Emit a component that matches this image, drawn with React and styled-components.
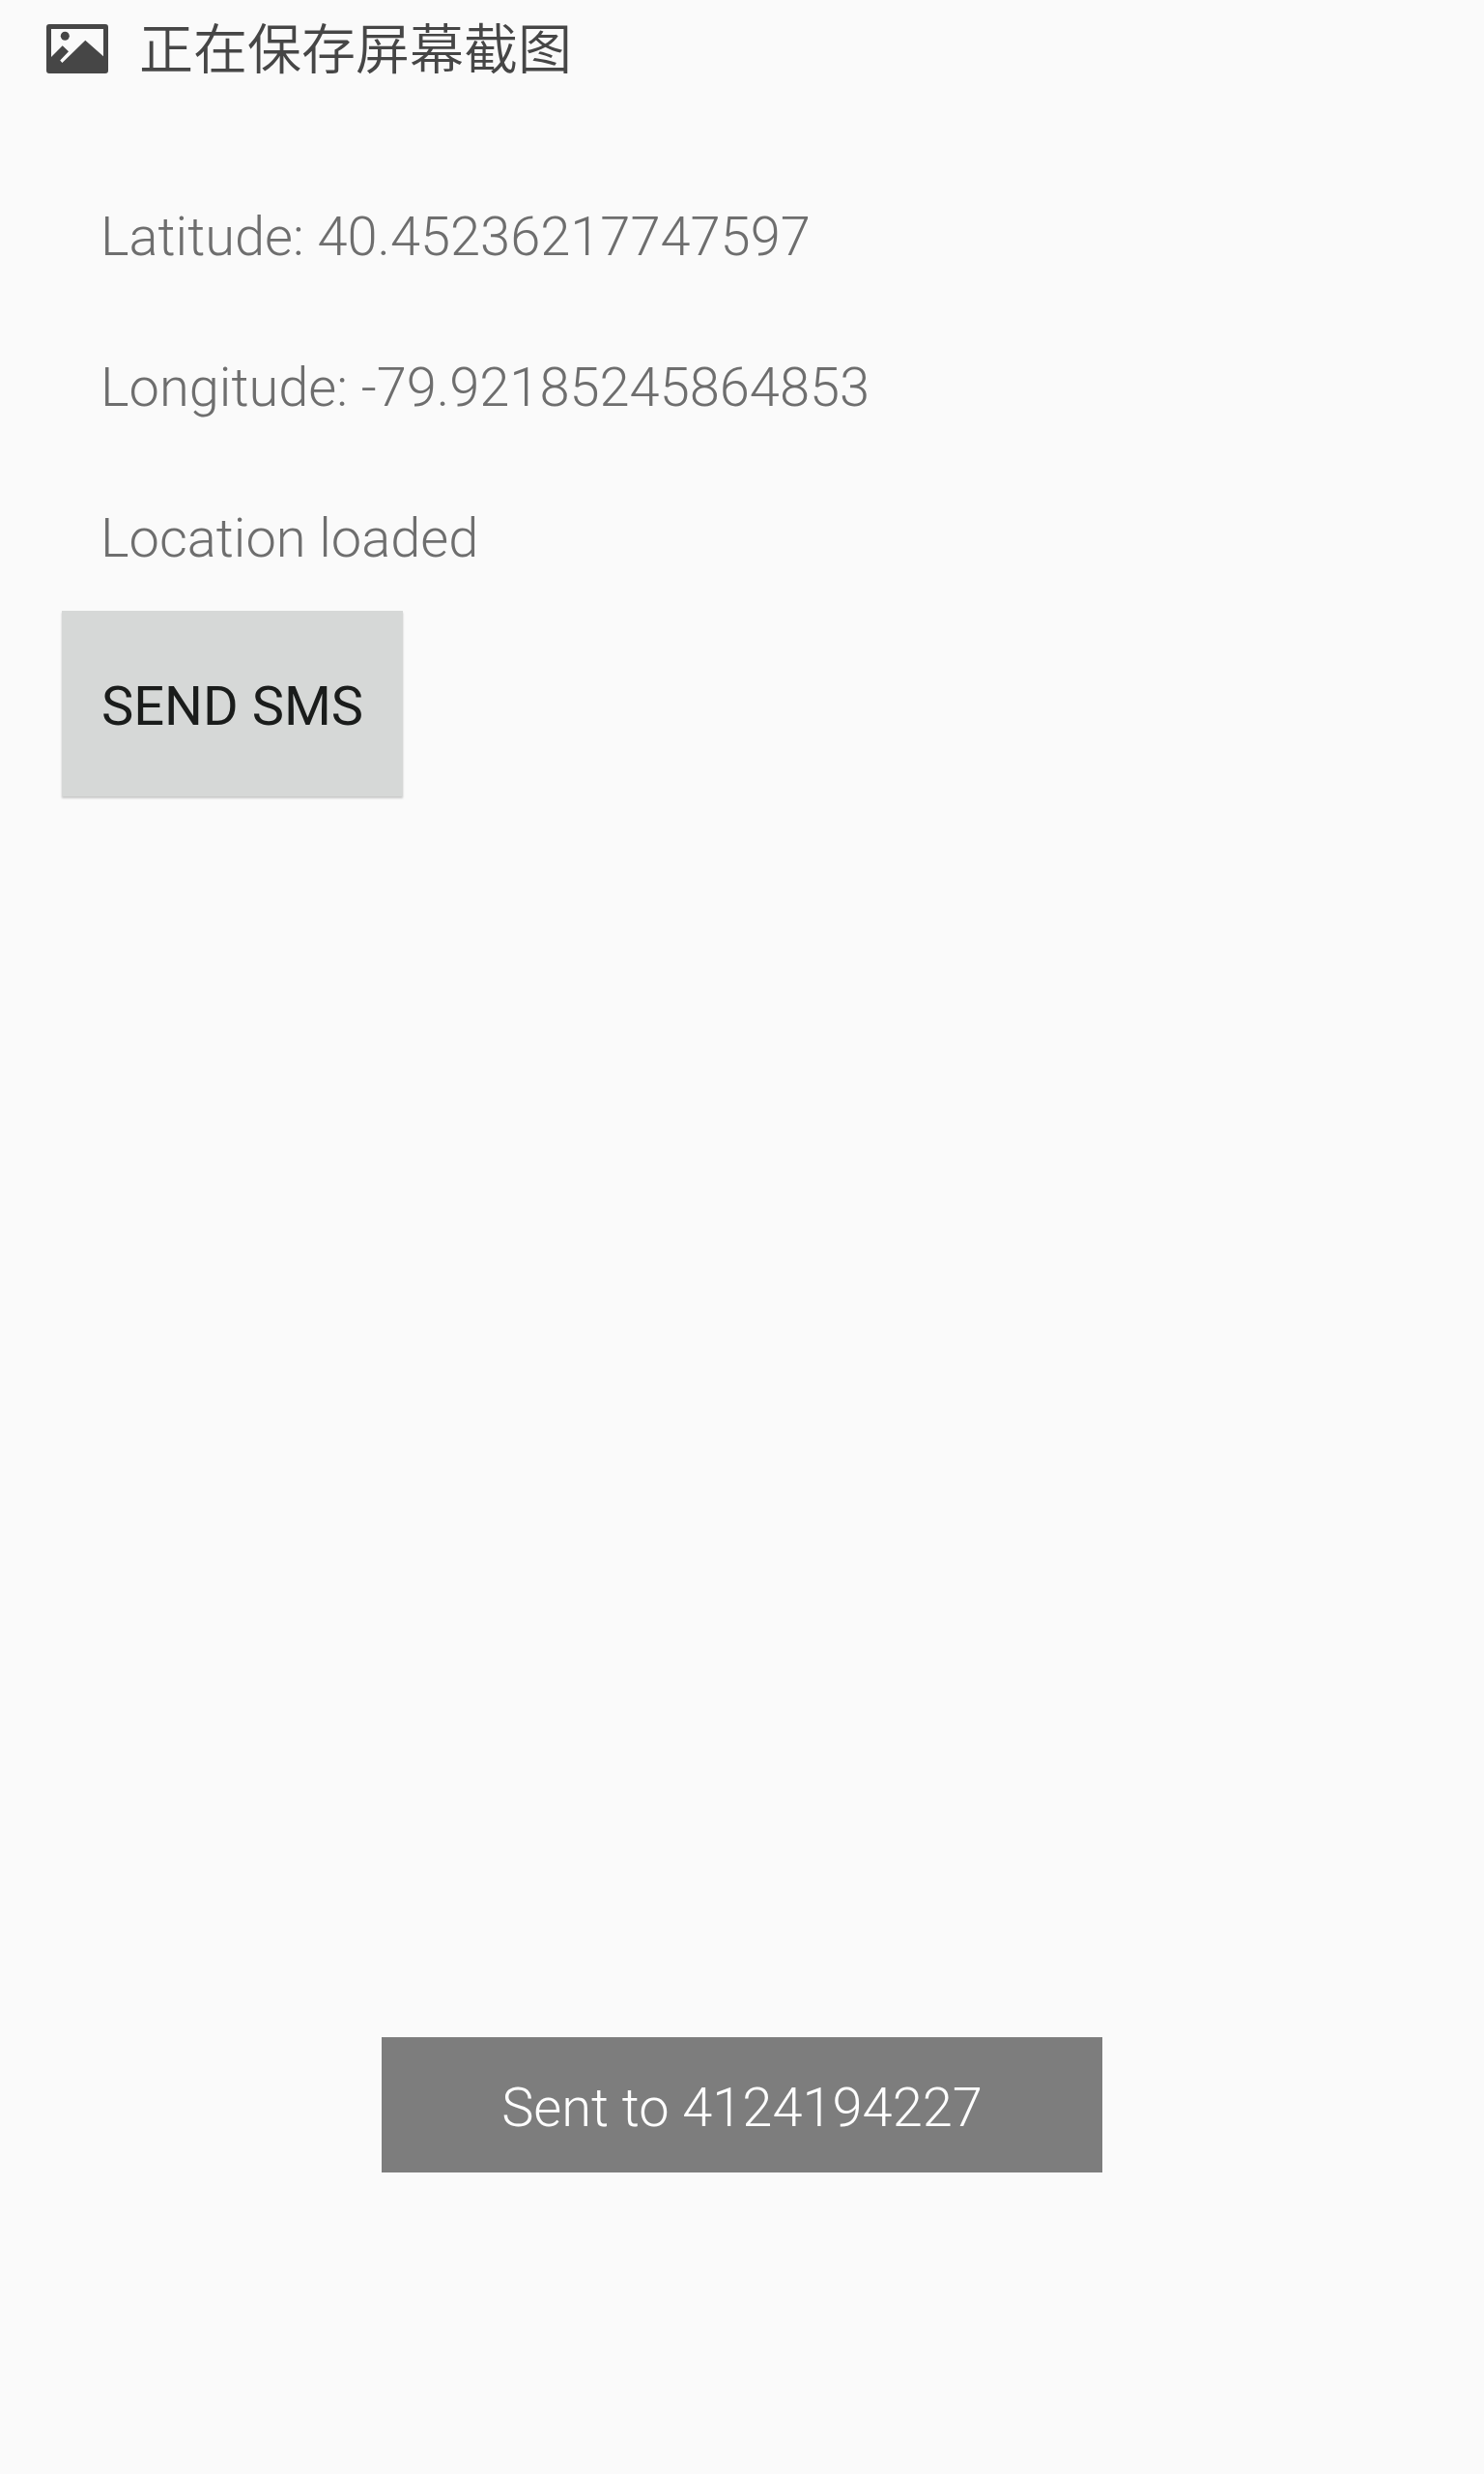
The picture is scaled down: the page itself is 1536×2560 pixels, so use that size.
import React from "react";
import styled, { createGlobalStyle } from "styled-components";

const GlobalStyle = createGlobalStyle`
  * { box-sizing: border-box; }
  body { margin: 0; background: #fafafa; font-family: Roboto, "Noto Sans CJK SC", sans-serif; }
`;
const Screen = styled.div`
  min-height: 100vh;
  display: flex;
  flex-direction: column;
`;
const StatusBar = styled.header`
  display: flex;
  align-items: center;
  gap: 32px;
  height: 101px;
  padding-left: 48px;
  color: #464646;
`;
const PictureIcon = styled.svg`
  width: 64px;
  height: 51px;
  flex: none;
`;
const StatusText = styled.span`
  padding-top: 3px;
  font-size: 56px;
  font-weight: 350;
  line-height: 84px;
`;
const Content = styled.main`
  flex: 1;
  display: flex;
  flex-direction: column;
  align-items: flex-start;
  gap: 42px;
  padding: 111px 64px 0;
`;
const Readings = styled.div`
  display: flex;
  flex-direction: column;
  gap: 90px;
  padding: 0 40px;
`;
const Reading = styled.p`
  margin: 0;
  color: #6e6e6e;
  font-size: 56px;
  font-weight: 300;
  line-height: 66px;
`;
const SendButton = styled.button`
  height: 192px;
  padding: 6px 41px 0;
  border: 0;
  background: #d6d8d7;
  box-shadow: 0 2px 2px rgba(0, 0, 0, 0.2);
  color: #1a1c1b;
  font: 400 56px Roboto, sans-serif;
`;
const Toast = styled.output`
  align-self: center;
  margin-bottom: 312px;
  padding: 6px 124px 0;
  background: #7d7d7d;
  color: #ffffff;
  font-size: 56px;
  font-weight: 300;
  line-height: 134px;
`;

export default function App() {
  return (
    <Screen>
      <GlobalStyle />
      <StatusBar>
        <PictureIcon viewBox="0 0 64 51" aria-hidden="true">
          <path
            fill="currentColor"
            fillRule="evenodd"
            d="M3 0H61Q64 0 64 3V48Q64 51 61 51H3Q0 51 0 48V3Q0 0 3 0ZM5 5V34L16.7 22.3L23 28.2L14.2 37.6L16.4 40L40.3 16.7L59 33.3V5Z"
          />
          <circle cx="19.3" cy="12.3" r="4.5" fill="currentColor" />
        </PictureIcon>
        <StatusText>正在保存屏幕截图</StatusText>
      </StatusBar>
      <Content>
        <Readings>
          <Reading>Latitude: 40.45236217747597</Reading>
          <Reading>Longitude: -79.92185245864853</Reading>
          <Reading>Location loaded</Reading>
        </Readings>
        <SendButton type="button">SEND SMS</SendButton>
      </Content>
      <Toast>Sent to 4124194227</Toast>
    </Screen>
  );
}
